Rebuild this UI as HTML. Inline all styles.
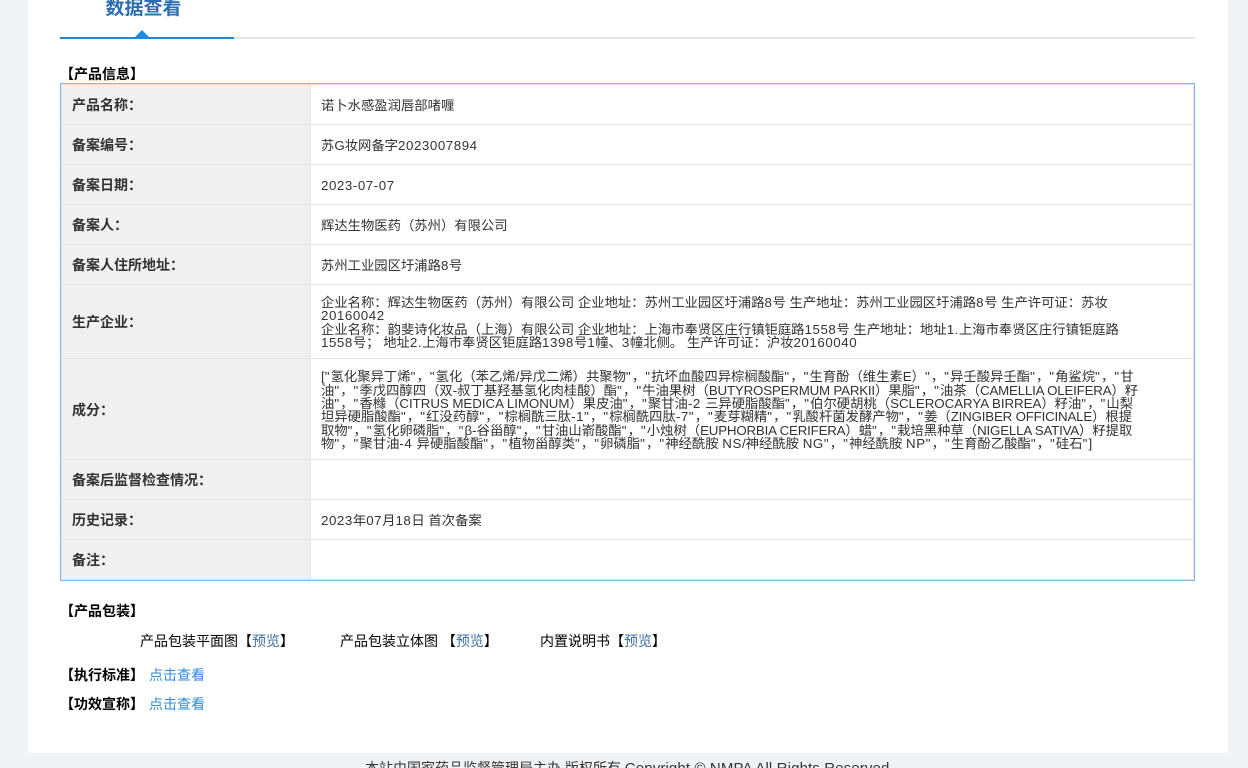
<!DOCTYPE html>
<html lang="zh-CN"><head><meta charset="utf-8"><title>数据查看</title>
<style>
html,body{margin:0;padding:0;width:1248px;height:768px;overflow:hidden;background:#f0f3f6}
body{position:relative;font-family:"Liberation Sans","Noto Sans CJK SC",sans-serif;font-size:13.33px;color:#333}
div{position:absolute;box-sizing:border-box}
.t{white-space:nowrap;height:14px;line-height:14px}
.l{left:72px;font-weight:bold;color:#333;font-size:14px}
.r{left:321px}
.h{font-weight:bold;color:#000;font-size:14px}
.k{color:#000;font-size:14px}
.a{color:#2f8bdc;font-size:14px}
.p{color:#3a6ea5}
.n{letter-spacing:.55px}
.u{letter-spacing:-.2px}
.w{letter-spacing:-.05px}
.m{letter-spacing:.6px}
i{font-style:normal;letter-spacing:1.15px}
.g{left:62px;width:1131px;height:1px;background:#e6e6e6}
</style></head><body>
<div style="left:28px;top:0;width:1200px;height:753px;background:#fff"></div>
<div class="t" style="left:105.5px;top:-2px;font-size:19px;line-height:22px;height:22px;font-weight:bold;color:#2a6db0">数据查看</div>
<div style="left:60px;top:37px;width:1135px;height:2px;background:#e6e6e6"></div>
<div style="left:60px;top:37px;width:174px;height:2px;background:#2188dd"></div>
<div style="left:135px;top:30px;width:0;height:0;border-left:7px solid transparent;border-right:7px solid transparent;border-bottom:7px solid #2188dd"></div>
<div class="t h" style="left:60px;top:67px">【产品信息】</div>

<div style="left:60px;top:83px;width:1135px;height:498px;border:1px solid #8db4ea;background:#fff"></div>
<div style="left:61px;top:84px;width:1133px;height:496px;border:1px solid #dfe4ec"></div>
<div style="left:62px;top:85px;width:248px;height:494px;background:#f0f0f0"></div>
<div style="left:310px;top:85px;width:1px;height:494px;background:#e6e6e6"></div>
<div class="g" style="top:124px"></div>
<div class="g" style="top:164px"></div>
<div class="g" style="top:204px"></div>
<div class="g" style="top:244px"></div>
<div class="g" style="top:284px"></div>
<div class="g" style="top:358px"></div>
<div class="g" style="top:459px"></div>
<div class="g" style="top:499px"></div>
<div class="g" style="top:539px"></div>

<div class="t l" style="top:98px">产品名称：</div>
<div class="t l" style="top:138px">备案编号：</div>
<div class="t l" style="top:178px">备案日期：</div>
<div class="t l" style="top:218px">备案人：</div>
<div class="t l" style="top:258px">备案人住所地址：</div>
<div class="t l" style="top:315px">生产企业：</div>
<div class="t l" style="top:403px">成分：</div>
<div class="t l" style="top:473px">备案后监督检查情况：</div>
<div class="t l" style="top:513px">历史记录：</div>
<div class="t l" style="top:553px">备注：</div>

<div class="t r" style="top:99px">诺卜水感盈润唇部啫喱</div>
<div class="t r" style="top:139px">苏G妆网备字<span class="n">2023007894</span></div>
<div class="t r" style="top:179px"><span class="n">2023-07-07</span></div>
<div class="t r" style="top:219px">辉达生物医药（苏州）有限公司</div>
<div class="t r" style="top:259px">苏州工业园区圩浦路<span class="n">8</span>号</div>

<div class="t r" style="top:296px">企业名称：辉达生物医药（苏州）有限公司 企业地址：苏州工业园区圩浦路<span class="n">8</span>号 生产地址：苏州工业园区圩浦路<span class="n">8</span>号 生产许可证：苏妆</div>
<div class="t r" style="top:309px"><span class="n">20160042</span></div>
<div class="t r" style="top:323px">企业名称：韵斐诗化妆品（上海）有限公司 企业地址：上海市奉贤区庄行镇钜庭路<span class="n">1558</span>号 生产地址：地址<span class="n">1.</span>上海市奉贤区庄行镇钜庭路</div>
<div class="t r" style="top:336px"><span class="n">1558</span>号； 地址<span class="n">2.</span>上海市奉贤区钜庭路<span class="n">1398</span>号<span class="n">1</span>幢、<span class="n">3</span>幢北侧。 生产许可证：沪妆<span class="n">20160040</span></div>

<div class="t r" style="top:370px">[<i>"</i>氢化聚异丁烯<i>"</i>，<i>"</i>氢化（苯乙烯/异戊二烯）共聚物<i>"</i>，<i>"</i>抗坏血酸四异棕榈酸酯<i>"</i>，<i>"</i>生育酚（维生素E）<i>"</i>，<i>"</i>异壬酸异壬酯<i>"</i>，<i>"</i>角鲨烷<i>"</i>，<i>"</i>甘</div>
<div class="t r" style="top:384px">油<i>"</i>，<i>"</i>季戊四醇四（双-叔丁基羟基氢化肉桂酸）酯<i>"</i>，<i>"</i>牛油果树（<span class="u">BUTYROSPERMUM PARKII</span>）果脂<i>"</i>，<i>"</i>油茶（<span class="u">CAMELLIA OLEIFERA</span>）籽</div>
<div class="t r" style="top:397px">油<i>"</i>，<i>"</i>香橼（<span class="w">CITRUS MEDICA LIMONUM</span>）果皮油<i>"</i>，<i>"</i>聚甘油<span class="n">-2 </span>三异硬脂酸酯<i>"</i>，<i>"</i>伯尔硬胡桃（<span class="w">SCLEROCARYA BIRREA</span>）籽油<i>"</i>，<i>"</i>山梨</div>
<div class="t r" style="top:410px">坦异硬脂酸酯<i>"</i>，<i>"</i>红没药醇<i>"</i>，<i>"</i>棕榈酰三肽<span class="n">-1</span><i>"</i>，<i>"</i>棕榈酰四肽<span class="n">-7</span><i>"</i>，<i>"</i>麦芽糊精<i>"</i>，<i>"</i>乳酸杆菌发酵产物<i>"</i>，<i>"</i>姜（<span class="u">ZINGIBER OFFICINALE</span>）根提</div>
<div class="t r" style="top:424px">取物<i>"</i>，<i>"</i>氢化卵磷脂<i>"</i>，<i>"</i>β-谷甾醇<i>"</i>，<i>"</i>甘油山嵛酸酯<i>"</i>，<i>"</i>小烛树（<span class="u">EUPHORBIA CERIFERA</span>）蜡<i>"</i>，<i>"</i>栽培黑种草（<span class="u">NIGELLA SATIVA</span>）籽提取</div>
<div class="t r" style="top:437px">物<i>"</i>，<i>"</i>聚甘油<span class="n">-4 </span>异硬脂酸酯<i>"</i>，<i>"</i>植物甾醇类<i>"</i>，<i>"</i>卵磷脂<i>"</i>，<i>"</i>神经酰胺 <span class="m">NS</span>/神经酰胺 <span class="m">NG</span><i>"</i>，<i>"</i>神经酰胺 <span class="m">NP</span><i>"</i>，<i>"</i>生育酚乙酸酯<i>"</i>，<i>"</i>硅石<i>"</i>]</div>

<div class="t r" style="top:514px"><span class="n">2023</span>年<span class="n">07</span>月<span class="n">18</span>日 首次备案</div>

<div class="t h" style="left:60px;top:604px">【产品包装】</div>
<div class="t k" style="left:140px;top:634px">产品包装平面图【<span class="p">预览</span>】</div>
<div class="t k" style="left:340px;top:634px">产品包装立体图 【<span class="p">预览</span>】</div>
<div class="t k" style="left:540px;top:634px">内置说明书【<span class="p">预览</span>】</div>
<div class="t h" style="left:60px;top:668px">【执行标准】</div>
<div class="t a" style="left:149px;top:668px">点击查看</div>
<div class="t h" style="left:60px;top:697px">【功效宣称】</div>
<div class="t a" style="left:149px;top:697px">点击查看</div>

<div class="t" style="left:365px;top:760px;font-size:14px;line-height:16px;height:16px">本站由国家药品监督管理局主办 版权所有 <span style="font-size:15px;letter-spacing:.13px">Copyright © NMPA All Rights Reserved</span></div>
</body></html>
